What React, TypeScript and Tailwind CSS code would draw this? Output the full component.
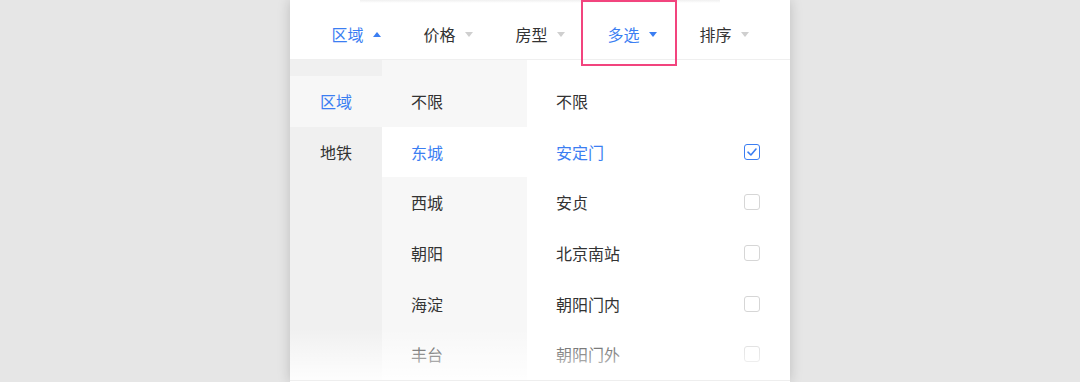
import React from "react";

const BLUE = "text-[#3b7ef2]";

function Arrow({ up, active }: { up?: boolean; active?: boolean }) {
  return (
    <svg width="8" height="5" viewBox="0 0 8 5" className="shrink-0">
      <path
        d={up ? "M0 5 L4 0 L8 5 Z" : "M0 0 L8 0 L4 5 Z"}
        fill={active ? "#3b7ef2" : "#cfcfcf"}
      />
    </svg>
  );
}

function Checkbox({ checked }: { checked?: boolean }) {
  return (
    <div
      className={
        checked
          ? "w-4 h-4 rounded-[3px] border border-[#3b7ef2] bg-white flex items-center justify-center"
          : "w-4 h-4 rounded-[3px] border border-[#d6d6d6] bg-white"
      }
    >
      {checked && (
        <svg width="12" height="12" viewBox="0 0 12 12">
          <path d="M2 6.2 L4.9 9 L10 3" fill="none" stroke="#3b7ef2" strokeWidth="1.6" strokeLinecap="round" strokeLinejoin="round" />
        </svg>
      )}
    </div>
  );
}

const tabs = [
  { label: "区域", active: true, up: true },
  { label: "价格" },
  { label: "房型" },
  { label: "多选", active: true },
  { label: "排序" },
];

const cities = ["不限", "东城", "西城", "朝阳", "海淀", "丰台"];
const stations = [
  { name: "不限", box: false },
  { name: "安定门", box: true, checked: true },
  { name: "安贞", box: true },
  { name: "北京南站", box: true },
  { name: "朝阳门内", box: true },
  { name: "朝阳门外", box: true },
];

export default function App() {
  return (
    <div
      className="w-[1080px] h-[382px] bg-[#e6e6e6] flex justify-center overflow-hidden"
      style={{ fontFamily: '"Noto Sans CJK SC", "Noto Sans", sans-serif' }}
    >
      <div className="relative w-[500px] h-full bg-white flex flex-col shadow-[0_0_12px_rgba(0,0,0,0.18)]">
        {/* faint edge of the card above */}
        <div className="absolute left-[70px] top-0 w-[360px] h-[3px] bg-gradient-to-b from-[#f0f0f0] to-white" />

        {/* filter tabs */}
        <div className="h-[60px] pt-[9px] px-5 flex border-b border-[#efefef] text-base text-[#333]">
          {tabs.map((t) => (
            <div key={t.label} className="flex-1 flex items-center justify-center gap-[9px]">
              <span className={t.active ? BLUE : ""}>{t.label}</span>
              <Arrow up={t.up} active={t.active} />
            </div>
          ))}
        </div>

        {/* highlight box */}
        <div className="absolute left-[291px] top-0 w-[96px] h-[66px] border-2 border-[#f2447e]" />

        {/* columns */}
        <div className="flex flex-1 text-base text-[#333]">
          <div className="w-[92px] bg-[#f0f0f0] pt-4">
            <div className={`h-[50.6px] pl-[30px] flex items-center bg-[#f7f7f7] ${BLUE}`}>区域</div>
            <div className="h-[50.6px] pl-[30px] flex items-center">地铁</div>
          </div>
          <div className="w-[145px] bg-[#f7f7f7] pt-4">
            {cities.map((c, i) => (
              <div
                key={c}
                className={
                  i === 1
                    ? `h-[50.6px] pl-[29px] flex items-center bg-white ${BLUE}`
                    : "h-[50.6px] pl-[29px] flex items-center"
                }
              >
                {c}
              </div>
            ))}
          </div>
          <div className="flex-1 pt-4">
            {stations.map((s) => (
              <div key={s.name} className="h-[50.6px] pl-[29px] pr-[30px] flex items-center justify-between">
                <span className={s.checked ? BLUE : ""}>{s.name}</span>
                {s.box && <Checkbox checked={s.checked} />}
              </div>
            ))}
          </div>
        </div>

        {/* bottom fade */}
        <div className="absolute left-0 right-0 bottom-[2px] h-[52px] bg-gradient-to-b from-white/0 to-white/90" />
        <div className="absolute left-0 right-0 bottom-0 h-[2px] bg-white border-t border-[#eeeeee]" />
      </div>
    </div>
  );
}
